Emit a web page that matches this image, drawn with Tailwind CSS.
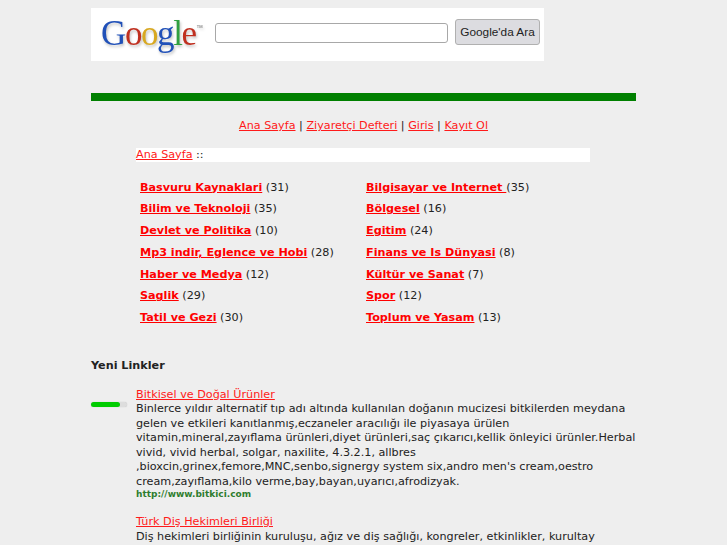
<!DOCTYPE html>
<html lang="tr">
<head>
<meta charset="UTF-8">
<title>Dizin</title>
<script src="https://cdn.jsdelivr.net/npm/@tailwindcss/browser@4"></script>
</head>
<body class="h-[545px] overflow-hidden bg-[#eeeeee] font-['DejaVu_Sans',sans-serif] text-[11.2px] leading-[14.5px] text-[#222222]">
<div class="ml-[91px] w-[545px] pt-2">
  <!-- arama kutusu -->
  <div class="flex h-[53px] w-[453px] items-start bg-white">
    <div class="mt-[8px] ml-[10px] flex w-[114px] items-start font-['Liberation_Serif',serif] text-[35px] leading-[36px] tracking-[-1.4px] [text-shadow:1px_2px_3px_rgba(0,0,0,0.25)] blur-[0.4px]"><span class="text-[#2050b8]">G</span><span class="text-[#c03020]">o</span><span class="text-[#d8a820]">o</span><span class="text-[#2050b8]">g</span><span class="text-[#30a040]">l</span><span class="text-[#c03020]">e</span><span class="mt-[8px] ml-[1px] font-['Liberation_Sans',sans-serif] text-[4px] leading-[5px] tracking-normal text-[#555555]">TM</span></div>
    <input type="text" class="mt-[15px] h-5 w-[233px] rounded-[3px] border border-[#a8a8a8] bg-white">
    <button class="mt-[11px] ml-[7px] h-[26px] w-[85px] rounded-[3px] border border-[#b0b0b0] bg-[#dcdce0] font-['Liberation_Sans',sans-serif] text-[11.8px] text-[#222222]">Google'da Ara</button>
  </div>
  <div class="mt-8 h-2 bg-[#008000]"></div>
  <!-- menu -->
  <p class="mt-[18px] text-center"><a href="#" class="text-[#ff1a1a] underline">Ana Sayfa</a> | <a href="#" class="text-[#ff1a1a] underline">Ziyaretçi Defteri</a> | <a href="#" class="text-[#ff1a1a] underline">Giris</a> | <a href="#" class="text-[#ff1a1a] underline">Kayıt Ol</a></p>
  <div class="mt-[14px] ml-[45px] h-[14px] w-[454px] bg-white"><a href="#" class="text-[#ff1a1a] underline">Ana Sayfa</a> ::</div>
  <!-- kategoriler -->
  <div class="mt-[19px] ml-[49px] grid w-[440px] grid-cols-[226px_1fr] auto-rows-[21.8px]">
    <div><a href="#" class="font-bold text-[#ff0000] underline">Basvuru Kaynaklari</a> (31)</div>
    <div><a href="#" class="font-bold text-[#ff0000] underline">Bilgisayar ve Internet </a> (35)</div>
    <div><a href="#" class="font-bold text-[#ff0000] underline">Bilim ve Teknoloji</a> (35)</div>
    <div><a href="#" class="font-bold text-[#ff0000] underline">Bölgesel</a> (16)</div>
    <div><a href="#" class="font-bold text-[#ff0000] underline">Devlet ve Politika</a> (10)</div>
    <div><a href="#" class="font-bold text-[#ff0000] underline">Egitim</a> (24)</div>
    <div><a href="#" class="font-bold text-[#ff0000] underline">Mp3 indir, Eglence ve Hobi</a> (28)</div>
    <div><a href="#" class="font-bold text-[#ff0000] underline">Finans ve Is Dünyasi</a> (8)</div>
    <div><a href="#" class="font-bold text-[#ff0000] underline">Haber ve Medya</a> (12)</div>
    <div><a href="#" class="font-bold text-[#ff0000] underline">Kültür ve Sanat</a> (7)</div>
    <div><a href="#" class="font-bold text-[#ff0000] underline">Saglik</a> (29)</div>
    <div><a href="#" class="font-bold text-[#ff0000] underline">Spor</a> (12)</div>
    <div><a href="#" class="font-bold text-[#ff0000] underline">Tatil ve Gezi</a> (30)</div>
    <div><a href="#" class="font-bold text-[#ff0000] underline">Toplum ve Yasam</a> (13)</div>
  </div>
  <h3 class="mt-[26px] font-bold">Yeni Linkler</h3>
  <!-- linkler -->
  <div class="mt-[14px] flex">
    <div class="w-[45px] shrink-0 pt-[14px]"><div class="h-[5px] w-9 rounded-full bg-[#dddddd] shadow-[0_0_1px_#bbbbbb]"><div class="h-[5px] w-[29px] rounded-full bg-[#00cc00]"></div></div></div>
    <div class="w-[500px]">
      <a href="#" class="text-[#ff1a1a] underline">Bitkisel ve Doğal Ürünler</a><br>
      Binlerce yıldır alternatif tıp adı altında kullanılan doğanın mucizesi bitkilerden meydana gelen ve etkileri kanıtlanmış,eczaneler aracılığı ile piyasaya ürülen vitamin,mineral,zayıflama ürünleri,diyet ürünleri,saç çıkarıcı,kellik önleyici ürünler.Herbal vivid, vivid herbal, solgar, naxilite, 4.3.2.1, allbres ,bioxcin,grinex,femore,MNC,senbo,signergy system six,andro men's cream,oestro cream,zayıflama,kilo verme,bay,bayan,uyarıcı,afrodizyak.
      <div class="text-[9px] font-bold leading-[11px] text-[#2e7d2e]">http://www.bitkici.com</div>
    </div>
  </div>
  <div class="mt-[15px] ml-[45px] w-[500px]">
    <a href="#" class="text-[#ff1a1a] underline">Türk Diş Hekimleri Birliği</a><br>
    Diş hekimleri birliğinin kuruluşu, ağız ve diş sağlığı, kongreler, etkinlikler, kurultay
  </div>
</div>
</body>
</html>
